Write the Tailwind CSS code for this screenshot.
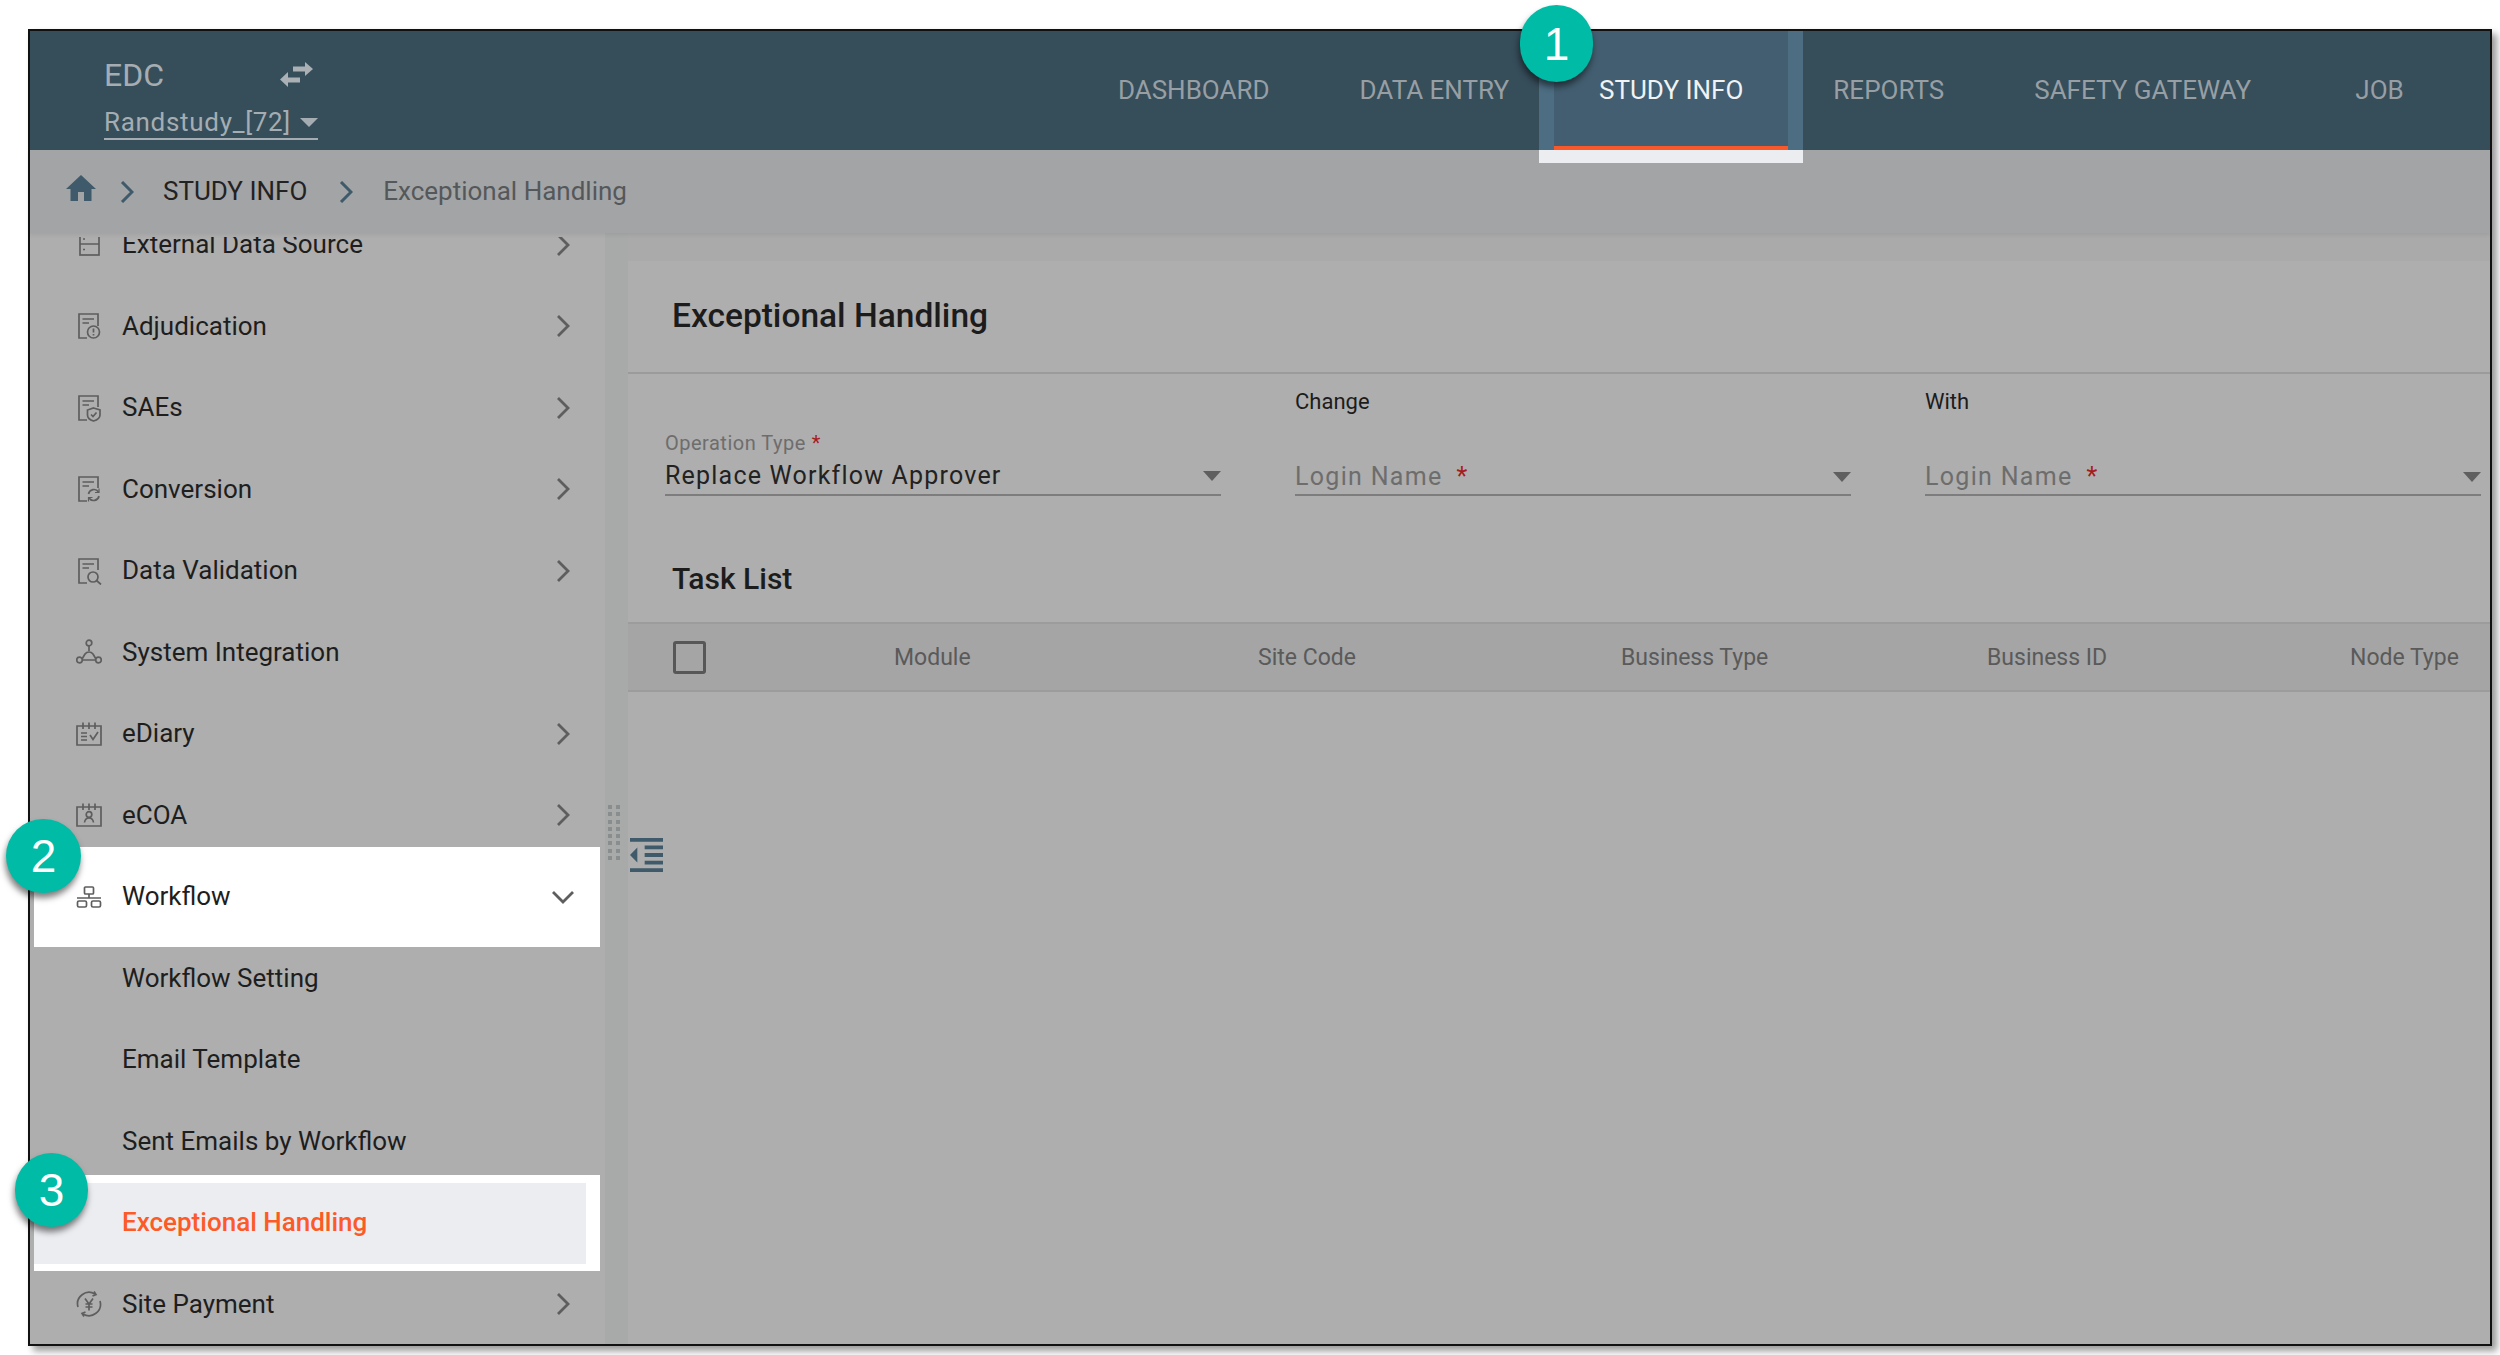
<!DOCTYPE html>
<html lang="en">

<head>
    <meta charset="UTF-8">
    <title>EDC - Exceptional Handling</title>
    <script src="https://cdn.jsdelivr.net/npm/@tailwindcss/browser@4"></script>
</head>

<body class="bg-white">
    <div class="relative w-[2500px] h-[1355px] overflow-hidden pl-[28px] pt-[29px] font-[Roboto,sans-serif]">

        <!-- Window frame -->
        <div class="w-[2464px] h-[1317px] border-2 border-[#111] shadow-[5px_5px_7px_rgba(0,0,0,0.4)] bg-[#aeaeae] flex flex-col">

            <!-- Header -->
            <header class="h-[119px] shrink-0 bg-[#364d5a] flex justify-between relative z-20">
                <div class="pl-[74px] pt-[24px] w-[320px]">
                    <div class="flex items-center w-[214px] justify-between">
                        <span class="text-[32px] leading-[40px] text-[#a5adb2]">EDC</span>
                        <svg class="w-[34px] h-[26px] mr-[4px]" viewBox="0 0 34 26" fill="#aab0b4">
                            <path d="M13 4.500 H25 V0 L33 7 L25 14 V9.500 H13 Z" />
                            <path d="M20 15.500 H8 V10 L0 17.500 L8 25 V20.500 H20 Z" />
                        </svg>
                    </div>
                    <div class="w-[214px] mt-[8px] h-[37px] pt-[4px] border-b-2 border-[#a5adb2] flex items-center justify-between">
                        <span class="text-[26px] leading-[31px] tracking-[0.7px] text-[#a5adb2]">Randstudy_[72]</span>
                        <span class="w-0 h-0 border-x-[9px] border-x-transparent border-t-[9px] border-t-[#a5adb2]"></span>
                    </div>
                </div>
                <nav class="flex text-[26px] text-[#979fa4] pr-[27px]">
                    <div class="px-[45px] flex items-center">DASHBOARD</div>
                    <div class="px-[45px] flex items-center">DATA ENTRY</div>
                    <!-- Highlighted tab -->
                    <div class="relative -mx-[15px] px-[15px] bg-[#4c6d82]">
                        <div class="h-full px-[45px] bg-[#425e70] border-b-4 border-[#f9582a] pt-[4px] flex items-center text-[#f0f2f3]">STUDY INFO</div>
                        <div class="absolute top-full inset-x-0 h-[13px] bg-[#ecedf1]"></div>
                    </div>
                    <div class="px-[45px] flex items-center">REPORTS</div>
                    <div class="px-[45px] flex items-center">SAFETY GATEWAY</div>
                    <div class="w-[167px] flex items-center justify-center">JOB</div>
                </nav>
            </header>

            <!-- Breadcrumb -->
            <div class="h-[83px] shrink-0 bg-[#a3a4a6] flex items-center pl-[36px] text-[26px] relative z-10 shadow-[0_2px_4px_rgba(0,0,0,0.07)]">
                <svg class="w-[30px] h-[26px] -mt-[8px]" viewBox="0 0 30 26" fill="#3f5a6a">
                    <path d="M15 0 L30 14 H25.500 V26 H18 V17 H12 V26 H4.500 V14 H0 Z" />
                </svg>
                <svg class="w-[14px] h-[22px] ml-[24px]" viewBox="0 0 14 22" fill="none" stroke="#3f5a6a" stroke-width="3">
                    <path d="M2 1 L12 11 L2 21" />
                </svg>
                <span class="ml-[29px] text-[#222]">STUDY INFO</span>
                <svg class="w-[14px] h-[22px] ml-[32px]" viewBox="0 0 14 22" fill="none" stroke="#3f5a6a" stroke-width="3">
                    <path d="M2 1 L12 11 L2 21" />
                </svg>
                <span class="ml-[30px] text-[#55585a]">Exceptional Handling</span>
            </div>

            <div class="flex flex-1 min-h-0">
                <!-- Sidebar -->
                <aside class="w-[575px] shrink-0 pt-[4px] text-[26px] text-[#1e1e1e]">
                    <div class="h-full overflow-hidden">
                        <div class="-mt-[33px]">
                            <div class="h-[81.5px] flex items-center pl-[46px] pr-[35px]">
                                <svg class="w-[26px] h-[26px] shrink-0 -mt-[1px]" viewBox="0 0 26 26" fill="none" stroke="#5e5e5e" stroke-width="1.700">
                                    <rect x="4" y="2" width="19" height="22" />
                                    <path d="M4 13 H23 M7 8 H9 M7 18.500 H9" />
                                </svg>
                                <span class="ml-[20px] flex-1">External Data Source</span>
                                <svg class="w-[14px] h-[22px]" viewBox="0 0 14 22" fill="none" stroke="#5e5e5e" stroke-width="2.800"><path d="M2 1 L12 11 L2 21" /></svg>
                            </div>
                            <div class="h-[81.5px] flex items-center pl-[46px] pr-[35px]">
                                <svg class="w-[26px] h-[28px] shrink-0" viewBox="0 0 26 28" fill="none" stroke="#5e5e5e" stroke-width="1.700">
                                    <path d="M11 26 H3 V2 H22 V14 M6.500 7 H18 M6.500 11 H13" />
                                    <circle cx="17.500" cy="20" r="6" />
                                    <path d="M17.500 16.500 V20.500 M17.500 22 V23.500" />
                                </svg>
                                <span class="ml-[20px] flex-1">Adjudication</span>
                                <svg class="w-[14px] h-[22px]" viewBox="0 0 14 22" fill="none" stroke="#5e5e5e" stroke-width="2.800"><path d="M2 1 L12 11 L2 21" /></svg>
                            </div>
                            <div class="h-[81.5px] flex items-center pl-[46px] pr-[35px]">
                                <svg class="w-[26px] h-[28px] shrink-0" viewBox="0 0 26 28" fill="none" stroke="#5e5e5e" stroke-width="1.700">
                                    <path d="M11 26 H3 V2 H22 V13 M6.500 7 H18 M6.500 11 H13" />
                                    <path d="M17.500 14 L24 16 V21 C24 24 21 26 17.500 27 C14 26 11.500 24 11.500 21 V16 Z" />
                                    <path d="M15 20.500 L17 22.500 L20.500 18.500" />
                                </svg>
                                <span class="ml-[20px] flex-1">SAEs</span>
                                <svg class="w-[14px] h-[22px]" viewBox="0 0 14 22" fill="none" stroke="#5e5e5e" stroke-width="2.800"><path d="M2 1 L12 11 L2 21" /></svg>
                            </div>
                            <div class="h-[81.5px] flex items-center pl-[46px] pr-[35px]">
                                <svg class="w-[26px] h-[28px] shrink-0" viewBox="0 0 26 28" fill="none" stroke="#5e5e5e" stroke-width="1.700">
                                    <path d="M11 26 H3 V2 H22 V13 M6.500 7 H18 M6.500 11 H13" />
                                    <path d="M12.500 19 A5.500 5.500 0 0 1 22.500 17 M23 21 A5.500 5.500 0 0 1 13 23" />
                                    <path d="M23 13.500 V17.500 H19 M12.500 26.500 V22.500 H16.500" stroke-width="1.200" />
                                </svg>
                                <span class="ml-[20px] flex-1">Conversion</span>
                                <svg class="w-[14px] h-[22px]" viewBox="0 0 14 22" fill="none" stroke="#5e5e5e" stroke-width="2.800"><path d="M2 1 L12 11 L2 21" /></svg>
                            </div>
                            <div class="h-[81.5px] flex items-center pl-[46px] pr-[35px]">
                                <svg class="w-[26px] h-[28px] shrink-0" viewBox="0 0 26 28" fill="none" stroke="#5e5e5e" stroke-width="1.700">
                                    <path d="M11 26 H3 V2 H22 V13 M6.500 7 H18 M6.500 11 H13" />
                                    <circle cx="17" cy="20" r="5" />
                                    <path d="M20.500 23.500 L25 27.500" />
                                </svg>
                                <span class="ml-[20px] flex-1">Data Validation</span>
                                <svg class="w-[14px] h-[22px]" viewBox="0 0 14 22" fill="none" stroke="#5e5e5e" stroke-width="2.800"><path d="M2 1 L12 11 L2 21" /></svg>
                            </div>
                            <div class="h-[81.5px] flex items-center pl-[46px] pr-[35px]">
                                <svg class="w-[26px] h-[26px] shrink-0" viewBox="0 0 26 26" fill="none" stroke="#5e5e5e" stroke-width="1.700">
                                    <circle cx="13" cy="4" r="2.800" />
                                    <circle cx="3.500" cy="21" r="2.800" />
                                    <circle cx="22.500" cy="21" r="2.800" />
                                    <path d="M13 7 V12 M6.200 19.800 L9 15 M19.800 19.800 L17 15 M6.500 21 H19.500 M9 15 A5 5 0 0 1 17 15" />
                                </svg>
                                <span class="ml-[20px] flex-1">System Integration</span>
                            </div>
                            <div class="h-[81.5px] flex items-center pl-[46px] pr-[35px]">
                                <svg class="w-[26px] h-[24px] shrink-0" viewBox="0 0 26 24" fill="none" stroke="#5e5e5e" stroke-width="1.700">
                                    <path d="M1 4 H25 V23 H1 Z M7 0.500 V7 M13 0.500 V7 M19 0.500 V7" />
                                    <path d="M5 11 H11 M5 14.500 H11 M5 18 H11 M14 13 L17 17.500 L22 10" />
                                </svg>
                                <span class="ml-[20px] flex-1">eDiary</span>
                                <svg class="w-[14px] h-[22px]" viewBox="0 0 14 22" fill="none" stroke="#5e5e5e" stroke-width="2.800"><path d="M2 1 L12 11 L2 21" /></svg>
                            </div>
                            <div class="h-[81.5px] flex items-center pl-[46px] pr-[35px]">
                                <svg class="w-[26px] h-[24px] shrink-0" viewBox="0 0 26 24" fill="none" stroke="#5e5e5e" stroke-width="1.700">
                                    <path d="M1 4 H25 V23 H1 Z M7 0.500 V7 M13 0.500 V7 M19 0.500 V7" />
                                    <circle cx="13" cy="11.500" r="2.800" />
                                    <path d="M8.500 19.500 C9 16 11 15 13 15 C15 15 17 16 17.500 19.500" />
                                </svg>
                                <span class="ml-[20px] flex-1">eCOA</span>
                                <svg class="w-[14px] h-[22px]" viewBox="0 0 14 22" fill="none" stroke="#5e5e5e" stroke-width="2.800"><path d="M2 1 L12 11 L2 21" /></svg>
                            </div>
                            <!-- Highlighted row -->
                            <div class="relative h-[81.5px] flex items-center pl-[46px] pr-[35px]">
                                <div class="absolute left-[3.500px] right-[5px] -top-[9px] -bottom-[9.500px] bg-white"></div>
                                <svg class="relative w-[26px] h-[22px] shrink-0" viewBox="0 0 26 22" fill="none" stroke="#5e5e5e" stroke-width="1.700">
                                    <rect x="8.500" y="1" width="9" height="7" rx="1" />
                                    <rect x="1.500" y="15" width="9" height="6" rx="1.500" />
                                    <rect x="15.500" y="15" width="9" height="6" rx="1.500" />
                                    <path d="M13 8 V12 M1 12 H25" />
                                </svg>
                                <span class="relative ml-[20px] flex-1">Workflow</span>
                                <svg class="relative w-[22px] h-[14px] -mr-[4px]" viewBox="0 0 22 14" fill="none" stroke="#5e5e5e" stroke-width="2.800"><path d="M1 2 L11 12 L21 2" /></svg>
                            </div>
                            <div class="h-[81.5px] flex items-center pl-[92px]">Workflow Setting</div>
                            <div class="h-[81.5px] flex items-center pl-[92px]">Email Template</div>
                            <div class="h-[81.5px] flex items-center pl-[92px]">Sent Emails by Workflow</div>
                            <!-- Highlighted row -->
                            <div class="relative h-[81.5px] flex items-center pl-[92px] text-[#fc5a26] font-medium">
                                <div class="absolute left-[3.500px] right-[5px] -top-[7px] -bottom-[7.500px] bg-white"></div>
                                <div class="absolute left-[3.500px] right-[19px] top-[1px] -bottom-[0.500px] bg-[#ecedf1]"></div>
                                <span class="relative">Exceptional Handling</span>
                            </div>
                            <div class="h-[81.5px] flex items-center pl-[46px] pr-[35px]">
                                <svg class="w-[26px] h-[26px] shrink-0" viewBox="0 0 26 26" fill="none" stroke="#5e5e5e" stroke-width="1.700">
                                    <path d="M2 16 A11.500 11.500 0 0 1 19 3 M24 10 A11.500 11.500 0 0 1 7 23" />
                                    <path d="M18 0.500 L20 3.500 L16.500 5 M8 25.500 L6 22.500 L9.500 21" />
                                    <path d="M9 7.500 L13 13 L17 7.500 M13 13 V19.500 M9.500 13 H16.500 M9.500 16 H16.500" />
                                </svg>
                                <span class="ml-[20px] flex-1">Site Payment</span>
                                <svg class="w-[14px] h-[22px]" viewBox="0 0 14 22" fill="none" stroke="#5e5e5e" stroke-width="2.800"><path d="M2 1 L12 11 L2 21" /></svg>
                            </div>
                        </div>
                    </div>
                </aside>

                <!-- Gutter with drag handle -->
                <div class="relative w-[23px] shrink-0 bg-[#a8aaaa]">
                    <div class="absolute left-[3px] top-[572px] grid grid-cols-2 gap-x-[4px] gap-y-[3.300px]">
                        <i class="w-[4px] h-[4px] bg-[#8a8d8e]"></i><i class="w-[4px] h-[4px] bg-[#8a8d8e]"></i>
                        <i class="w-[4px] h-[4px] bg-[#8a8d8e]"></i><i class="w-[4px] h-[4px] bg-[#8a8d8e]"></i>
                        <i class="w-[4px] h-[4px] bg-[#8a8d8e]"></i><i class="w-[4px] h-[4px] bg-[#8a8d8e]"></i>
                        <i class="w-[4px] h-[4px] bg-[#8a8d8e]"></i><i class="w-[4px] h-[4px] bg-[#8a8d8e]"></i>
                        <i class="w-[4px] h-[4px] bg-[#8a8d8e]"></i><i class="w-[4px] h-[4px] bg-[#8a8d8e]"></i>
                        <i class="w-[4px] h-[4px] bg-[#8a8d8e]"></i><i class="w-[4px] h-[4px] bg-[#8a8d8e]"></i>
                        <i class="w-[4px] h-[4px] bg-[#8a8d8e]"></i><i class="w-[4px] h-[4px] bg-[#8a8d8e]"></i>
                        <i class="w-[4px] h-[4px] bg-[#8a8d8e]"></i><i class="w-[4px] h-[4px] bg-[#8a8d8e]"></i>
                    </div>
                </div>

                <!-- Main content -->
                <main class="relative flex-1 min-w-0 flex flex-col">
                    <div class="h-[28px] shrink-0 bg-[#aaaaaa]"></div>
                    <div class="h-[113px] shrink-0 flex items-center pl-[44px] border-b-2 border-[#9b9b9b] pt-[2px] pb-[3px]">
                        <h1 class="text-[33.500px] font-medium text-[#1c1c1c]">Exceptional Handling</h1>
                    </div>

                    <!-- Form -->
                    <div class="grid grid-cols-[556px_556px_556px] gap-x-[74px] pl-[37px]">
                        <div>
                            <div class="h-[55px]"></div>
                            <div class="h-[67px] border-b-2 border-[#7d7d7d]">
                                <div class="h-[28px] flex items-center text-[20px] tracking-[0.5px] text-[#6d6d6d]">Operation Type<span class="ml-[6px] text-[#a51c1c]">*</span></div>
                                <div class="h-[37px] pt-[1px] flex items-center justify-between text-[25px] tracking-[1.200px] text-[#222]">
                                    Replace Workflow Approver
                                    <span class="w-0 h-0 border-x-[9px] border-x-transparent border-t-[10px] border-t-[#5f5f5f]"></span>
                                </div>
                            </div>
                        </div>
                        <div>
                            <div class="h-[55px] flex items-center text-[22px] text-[#1c1c1c]">Change</div>
                            <div class="h-[67px] border-b-2 border-[#7d7d7d] flex items-end">
                                <div class="w-full h-[37px] pt-[2px] flex items-center justify-between text-[25px] tracking-[1.300px] text-[#6d6d6d]">
                                    <span>Login Name<span class="ml-[14px] text-[#a51c1c]">*</span></span>
                                    <span class="w-0 h-0 border-x-[9px] border-x-transparent border-t-[10px] border-t-[#5f5f5f]"></span>
                                </div>
                            </div>
                        </div>
                        <div>
                            <div class="h-[55px] flex items-center text-[22px] text-[#1c1c1c]">With</div>
                            <div class="h-[67px] border-b-2 border-[#7d7d7d] flex items-end">
                                <div class="w-full h-[37px] pt-[2px] flex items-center justify-between text-[25px] tracking-[1.300px] text-[#6d6d6d]">
                                    <span>Login Name<span class="ml-[14px] text-[#a51c1c]">*</span></span>
                                    <span class="w-0 h-0 border-x-[9px] border-x-transparent border-t-[10px] border-t-[#5f5f5f]"></span>
                                </div>
                            </div>
                        </div>
                    </div>

                    <div class="h-[126px] shrink-0 flex items-center pt-[38px] pl-[44px]">
                        <h2 class="text-[30px] font-medium text-[#1c1c1c]">Task List</h2>
                    </div>

                    <!-- Table header -->
                    <div class="h-[70px] shrink-0 flex items-center bg-[#a5a5a5] border-y-2 border-[#9c9c9c] text-[23px] text-[#5a5a5a]">
                        <div class="w-[266px] pl-[45px]">
                            <div class="w-[33px] h-[33px] border-[3.500px] border-[#575757] rounded-[3px]"></div>
                        </div>
                        <div class="w-[364px] pt-[2px]">Module</div>
                        <div class="w-[363px] pt-[2px]">Site Code</div>
                        <div class="w-[366px] pt-[2px]">Business Type</div>
                        <div class="w-[363px] pt-[2px]">Business ID</div>
                        <div class="pt-[2px]">Node Type</div>
                    </div>

                    <!-- Collapse sidebar button -->
                    <svg class="absolute left-[2px] top-[605px] w-[33px] h-[34px]" viewBox="3 3 18 18" preserveAspectRatio="none" fill="#3f5a6a">
                        <path d="M11 17h10v-2H11v2zm-8-5l4 4V8l-4 4zm0 9h18v-2H3v2zM3 3v2h18V3H3zm8 6h10V7H11v2zm0 4h10v-2H11v2z" />
                    </svg>
                </main>
            </div>
        </div>

        <!-- Step badges -->
        <div class="absolute left-[1520px] top-[5px] w-[73px] h-[77px] rounded-full bg-[#00bba6] shadow-[-1px_5px_6px_rgba(0,0,0,0.5)] z-30 flex items-center justify-center text-white text-[46px] font-['Liberation_Sans',sans-serif] leading-none">1</div>
        <div class="absolute left-[6px] top-[819px] w-[75px] h-[74px] rounded-full bg-[#00bba6] shadow-[-1px_5px_6px_rgba(0,0,0,0.5)] z-30 flex items-center justify-center text-white text-[46px] font-['Liberation_Sans',sans-serif] leading-none">2</div>
        <div class="absolute left-[15px] top-[1153px] w-[73px] h-[74px] rounded-full bg-[#00bba6] shadow-[-1px_5px_6px_rgba(0,0,0,0.5)] z-30 flex items-center justify-center text-white text-[46px] font-['Liberation_Sans',sans-serif] leading-none">3</div>
    </div>
</body>

</html>
